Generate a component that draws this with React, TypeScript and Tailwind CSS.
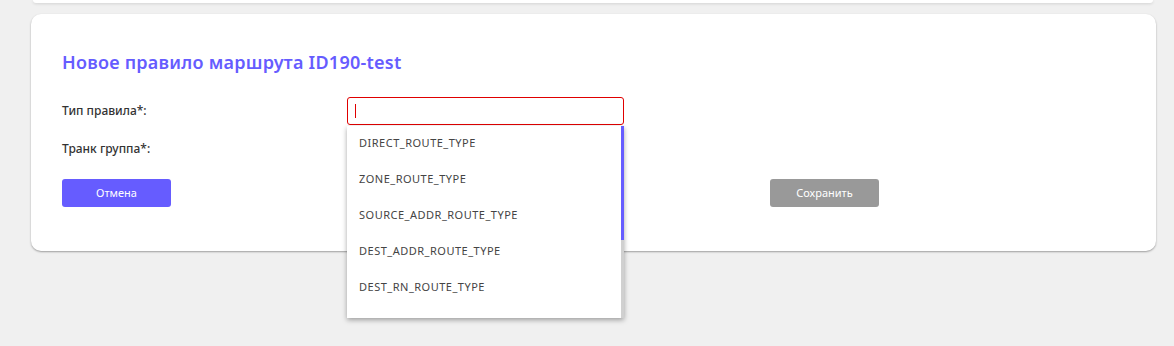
import React from 'react';

const options = [
  'DIRECT_ROUTE_TYPE',
  'ZONE_ROUTE_TYPE',
  'SOURCE_ADDR_ROUTE_TYPE',
  'DEST_ADDR_ROUTE_TYPE',
  'DEST_RN_ROUTE_TYPE',
];

const App: React.FC = () => {
  return (
    <div className="min-h-[346px] w-full bg-[#f0f0f0] font-['Noto_Sans',sans-serif]">
      {/* previous card, only its bottom edge is visible */}
      <div className="mx-[33px] mr-[21px] h-[3px] rounded-b-[10px] bg-white shadow-[0_1px_3px_rgba(0,0,0,0.12)]" />

      <div className="mt-[11px] ml-[31px] mr-[18px] h-[237px] rounded-[10px] bg-white px-[31px] pt-[37px] shadow-[0_1px_2px_rgba(0,0,0,0.35)]">
        <h2 className="text-[18px] font-semibold leading-[22px] tracking-[0.25px] text-[#665cff]">
          Новое правило маршрута ID190-test
        </h2>

        <div className="mt-[24px] flex h-[28px] items-center">
          <label className="w-[285px] text-[12px] font-medium text-[#333]">Тип правила*:</label>
          <div className="relative">
            <div className="flex h-[28px] w-[277px] items-center rounded-[3px] border border-[#e00000] bg-white px-[7px]">
              <span className="h-[14px] w-px bg-[#e00000]" />
            </div>
            <div className="absolute left-0 top-[29px] z-10 flex h-[192px] w-[277px] bg-white shadow-[0_2px_5px_rgba(0,0,0,0.35)]">
              <ul className="-mt-px flex-1">
                {options.map((o) => (
                  <li key={o} className="flex h-[36px] items-center pl-[12px] text-[11px] tracking-[0.5px] text-[#444]">
                    {o}
                  </li>
                ))}
              </ul>
              <div className="flex w-[3px] flex-col bg-[#d0d0d0]">
                <div className="h-[114px] bg-[#665cff]" />
              </div>
            </div>
          </div>
        </div>

        <div className="mt-[10px] flex h-[28px] items-center">
          <label className="w-[285px] text-[12px] font-medium text-[#333]">Транк группа*:</label>
          <div className="h-[28px] w-[277px] rounded-[3px] border border-[#ccc]" />
        </div>

        <div className="mt-[16px] flex gap-[599px]">
          <button className="h-[28px] w-[109px] rounded-[3px] bg-[#665cff] text-[11px] text-white">
            Отмена
          </button>
          <button className="h-[28px] w-[109px] rounded-[3px] bg-[#999] text-[11px] text-white">
            Сохранить
          </button>
        </div>
      </div>
    </div>
  );
};

export default App;
